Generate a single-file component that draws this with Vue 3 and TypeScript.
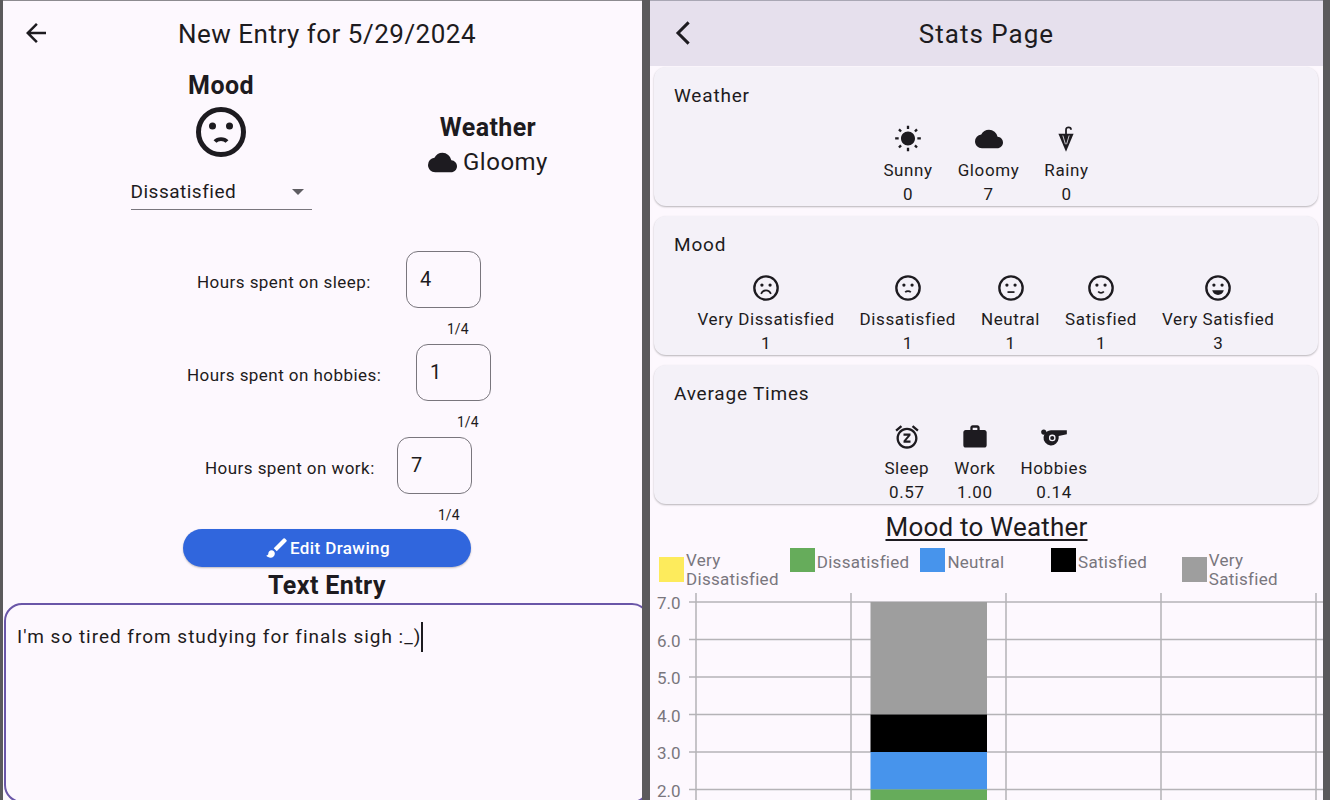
<script setup lang="ts">
const hourRows = [
  { label: "Hours spent on sleep:", value: "4", cls: "sleep" },
  { label: "Hours spent on hobbies:", value: "1", cls: "hobbies" },
  { label: "Hours spent on work:", value: "7", cls: "work" },
];

const weather = [
  { name: "Sunny", count: "0", icon: "sun" },
  { name: "Gloomy", count: "7", icon: "cloud" },
  { name: "Rainy", count: "0", icon: "umbrella" },
];

const moods = [
  { name: "Very Dissatisfied", count: "1", mouth: "M7.8 17c.8-1.9 2.3-3 4.2-3s3.4 1.1 4.2 3", fill: false },
  { name: "Dissatisfied", count: "1", mouth: "M9.6 15.6c.6-.7 1.4-1 2.4-1s1.8.3 2.4 1", fill: false },
  { name: "Neutral", count: "1", mouth: "M9 15.5h6", fill: false },
  { name: "Satisfied", count: "1", mouth: "M9.6 15c.6.8 1.4 1.2 2.4 1.2s1.8-.4 2.4-1.2", fill: false },
  { name: "Very Satisfied", count: "3", mouth: "M7 14h10c-.7 2.4-2.7 4-5 4s-4.3-1.6-5-4z", fill: true },
];

const times = [
  { name: "Sleep", value: "0.57", icon: "alarm" },
  { name: "Work", value: "1.00", icon: "work" },
  { name: "Hobbies", value: "0.14", icon: "whistle" },
];

const legend = [
  { color: "#fdeb5c", text: "Very\nDissatisfied", cls: "low" },
  { color: "#66ac5b", text: "Dissatisfied", cls: "" },
  { color: "#4794ec", text: "Neutral", cls: "" },
  { color: "#000000", text: "Satisfied", cls: "" },
  { color: "#9e9e9e", text: "Very\nSatisfied", cls: "low" },
];

const yTicks = [
  { label: "7.0", y: 12 },
  { label: "6.0", y: 49.5 },
  { label: "5.0", y: 87 },
  { label: "4.0", y: 124.5 },
  { label: "3.0", y: 162 },
  { label: "2.0", y: 199.5 },
];
const xLines = [46, 201, 356, 511, 666];
const bars = [
  { color: "#9e9e9e", y: 12, h: 112.5 },
  { color: "#000000", y: 124.5, h: 37.5 },
  { color: "#4794ec", y: 162, h: 37.5 },
  { color: "#66ac5b", y: 199.5, h: 20 },
];
</script>

<template>
  <div class="screen">
    <!-- entry page -->
    <section class="entry">
      <header class="entry-head">
        <svg class="back" viewBox="0 0 24 24"><path d="M20 11H7.83l5.59-5.59L12 4l-8 8 8 8 1.41-1.41L7.83 13H20z" /></svg>
        <h1>New Entry for 5/29/2024</h1>
      </header>

      <div class="pickers">
        <div class="mood-col">
          <h2>Mood</h2>
          <svg class="mood-big" viewBox="2 2 20 20">
            <circle cx="12" cy="12" r="9" fill="none" stroke="#1d1b20" stroke-width="2" />
            <circle cx="8.6" cy="9.6" r="1.4" />
            <circle cx="15.4" cy="9.6" r="1.4" />
            <path d="M9.6 15.8c.6-.7 1.4-1 2.4-1s1.8.3 2.4 1" fill="none" stroke="#1d1b20" stroke-width="1.5" />
          </svg>
          <div class="dropdown">
            <span>Dissatisfied</span>
            <i class="caret"></i>
          </div>
        </div>
        <div class="weather-col">
          <h2>Weather</h2>
          <div class="weather-now">
            <svg viewBox="0 0 24 24"><path d="M19.35 10.04A7.49 7.49 0 0 0 12 4C9.11 4 6.6 5.64 5.35 8.04A5.994 5.994 0 0 0 0 14c0 3.31 2.69 6 6 6h13c2.76 0 5-2.24 5-5 0-2.64-2.05-4.78-4.65-4.96z" /></svg>
            <span>Gloomy</span>
          </div>
        </div>
      </div>

      <div class="hours">
        <div v-for="row in hourRows" :key="row.cls" class="hour-row" :class="row.cls">
          <div class="hour-line">
            <span class="hour-label">{{ row.label }}</span>
            <div class="hour-box">{{ row.value }}</div>
          </div>
          <div class="counter">1/4</div>
        </div>
      </div>

      <div class="draw-btn">
        <svg viewBox="0 0 24 24"><path d="M7 14c-1.66 0-3 1.34-3 3 0 1.31-1.16 2-2 2 .92 1.22 2.49 2 4 2 2.21 0 4-1.79 4-4 0-1.66-1.34-3-3-3zm13.71-9.37-1.34-1.34a.996.996 0 0 0-1.41 0L9 12.25 11.75 15l8.96-8.96a.996.996 0 0 0 0-1.41z" /></svg>
        <span>Edit Drawing</span>
      </div>

      <h2 class="text-title">Text Entry</h2>
      <div class="text-box">
        <span>I'm so tired from studying for finals sigh :_)</span><i class="cursor"></i>
      </div>
    </section>

    <!-- stats page -->
    <section class="stats">
      <header class="stats-head">
        <svg class="chevron" viewBox="0 0 24 24"><path d="M16.5 3.5 8 12l8.5 8.5" /></svg>
        <h1>Stats Page</h1>
      </header>

      <div class="cards">
        <div class="card">
          <h3>Weather</h3>
          <div class="items">
            <div v-for="w in weather" :key="w.name" class="item">
              <svg viewBox="0 0 24 24" class="item-icon">
                <template v-if="w.icon === 'sun'">
                  <path d="M6.76 4.84l-1.8-1.79-1.41 1.41 1.79 1.79 1.42-1.41zM4 10.5H1v2h3v-2zm9-9.95h-2V3.5h2V.55zm7.45 3.91-1.41-1.41-1.79 1.79 1.41 1.41 1.79-1.79zm-3.21 13.7 1.79 1.8 1.41-1.41-1.8-1.79-1.4 1.4zM20 10.5v2h3v-2h-3zm-8-5c-3.31 0-6 2.69-6 6s2.69 6 6 6 6-2.69 6-6-2.69-6-6-6zm-1 16.95h2V19.5h-2v2.95zm-7.45-3.91 1.41 1.41 1.79-1.8-1.41-1.41-1.79 1.8z" />
                </template>
                <template v-else-if="w.icon === 'cloud'">
                  <path d="M19.35 10.04A7.49 7.49 0 0 0 12 4C9.11 4 6.6 5.64 5.35 8.04A5.994 5.994 0 0 0 0 14c0 3.31 2.69 6 6 6h13c2.76 0 5-2.24 5-5 0-2.64-2.05-4.78-4.65-4.96z" />
                </template>
                <template v-else>
                  <path d="M5.500 7.500h13L12 23z" />
                  <path d="M12 8V4.200C12 2.700 13 2 14.200 2s2.100.800 2.100 2" fill="none" stroke="#1d1b20" stroke-width="1.500" />
                  <path d="M9.300 9l2.200 7.500M14.700 9l-2.200 7.500" fill="none" stroke="#f4f1f8" stroke-width=".7" />
                </template>
              </svg>
              <span>{{ w.name }}</span>
              <span>{{ w.count }}</span>
            </div>
          </div>
        </div>

        <div class="card">
          <h3>Mood</h3>
          <div class="items">
            <div v-for="m in moods" :key="m.name" class="item">
              <svg viewBox="0 0 24 24" class="item-icon">
                <circle cx="12" cy="12" r="10" fill="none" stroke="#1d1b20" stroke-width="2" />
                <circle cx="8.500" cy="9.500" r="1.400" />
                <circle cx="15.500" cy="9.500" r="1.400" />
                <path :d="m.mouth" :fill="m.fill ? '#1d1b20' : 'none'" :stroke="m.fill ? 'none' : '#1d1b20'" stroke-width="1.500" />
              </svg>
              <span>{{ m.name }}</span>
              <span>{{ m.count }}</span>
            </div>
          </div>
        </div>

        <div class="card">
          <h3>Average Times</h3>
          <div class="items">
            <div v-for="t in times" :key="t.name" class="item">
              <svg viewBox="0 0 24 24" class="item-icon">
                <template v-if="t.icon === 'alarm'">
                  <path d="M7.880 3.390 6.600 1.860 2 5.710l1.290 1.530 4.590-3.850zM22 5.720l-4.600-3.860-1.290 1.530 4.600 3.860L22 5.720zM12 4c-4.970 0-9 4.030-9 9s4.020 9 9 9c4.970 0 9-4.030 9-9s-4.030-9-9-9zm0 16c-3.870 0-7-3.130-7-7s3.130-7 7-7 7 3.130 7 7-3.130 7-7 7zM9 11h3.630L9 15.200V17h6v-2h-3.630L15 10.800V9H9v2z" />
                </template>
                <template v-else-if="t.icon === 'work'">
                  <path d="M20 6h-4V4c0-1.110-.89-2-2-2h-4c-1.110 0-2 .89-2 2v2H4c-1.110 0-1.990.89-1.990 2L2 19c0 1.110.89 2 2 2h16c1.110 0 2-.89 2-2V8c0-1.110-.89-2-2-2zm-6 0h-4V4h4v2z" />
                </template>
                <template v-else>
                  <circle cx="3.200" cy="7.800" r="2.200" />
                  <path d="M10.500 6.300H23v3.400l-7 1.400v2A6.500 6.500 0 1 1 10.500 6.300z" />
                  <circle cx="10.500" cy="12.800" r="2.300" fill="none" stroke="#f4f1f8" stroke-width="1.100" />
                </template>
              </svg>
              <span>{{ t.name }}</span>
              <span>{{ t.value }}</span>
            </div>
          </div>
        </div>
      </div>

      <h2 class="chart-title">Mood to Weather</h2>
      <div class="legend">
        <div v-for="l in legend" :key="l.color" class="legend-item" :class="l.cls">
          <i :style="{ background: l.color }"></i>
          <span>{{ l.text }}</span>
        </div>
      </div>
      <svg class="chart" viewBox="0 0 673 210" width="673" height="210">
        <line v-for="x in xLines" :key="x" :x1="x" :x2="x" y1="3" y2="210" stroke="#a9a7ab" stroke-width="1.300" />
        <line v-for="t in yTicks" :key="t.label" x1="39" x2="673" :y1="t.y" :y2="t.y" stroke="#b5b3b7" stroke-width="1.500" />
        <rect v-for="b in bars" :key="b.color" x="220.500" :y="b.y" width="116.500" :height="b.h" :fill="b.color" />
        <text v-for="t in yTicks" :key="'l' + t.label" x="7" :y="t.y + 7" class="tick">{{ t.label }}</text>
      </svg>
    </section>
  </div>
</template>

<style scoped>
.screen {
  width: 1330px;
  height: 800px;
  display: flex;
  overflow: hidden;
  background: #5b5a5c;
  font-family: Roboto, "Liberation Sans", sans-serif;
  color: #1d1b20;
}
svg {
  fill: #1d1b20;
  display: block;
}
h1,
h2,
h3 {
  margin: 0;
  font-weight: 400;
}

.entry {
  width: 639px;
  margin-left: 3px;
  height: 800px;
  background: #fdf8fe;
  display: flex;
  flex-direction: column;
  border-top: 1px solid #8d8b90;
  box-sizing: border-box;
  overflow: hidden;
}
.entry-head {
  height: 65px;
  display: flex;
  align-items: center;
  position: relative;
  justify-content: center;
  flex: none;
  padding-left: 9px;
}
.entry-head h1 {
  font-size: 26px;
  line-height: 32px;
  margin-top: 1px;
  letter-spacing: 0.5px;
}
.back {
  position: absolute;
  left: 18px;
  top: 17px;
  width: 30px;
  height: 30px;
}
.pickers {
  display: flex;
  height: 160px;
  flex: none;
}
.mood-col {
  width: 436px;
  display: flex;
  flex-direction: column;
  align-items: center;
}
.mood-col h2,
.weather-col h2 {
  font-size: 25px;
  font-weight: 700;
  line-height: 28px;
  letter-spacing: 0.4px;
}
.mood-col h2 {
  margin-top: 6px;
}
.mood-big {
  width: 50px;
  height: 50px;
  margin-top: 7px;
}
.dropdown {
  width: 181px;
  height: 53px;
  box-sizing: border-box;
  border-bottom: 1.500px solid #79767d;
  display: flex;
  align-items: center;
  justify-content: space-between;
  padding: 17px 8px 0 0;
  font-size: 19px;
  letter-spacing: 0.5px;
}
.caret {
  width: 0;
  height: 0;
  border-left: 6px solid transparent;
  border-right: 6px solid transparent;
  border-top: 6px solid #5f5d62;
}
.weather-col {
  width: 100px;
  margin-left: -1px;
  display: flex;
  flex-direction: column;
  align-items: center;
  padding-top: 48px;
}
.weather-now {
  display: flex;
  align-items: center;
  gap: 6px;
  font-size: 24px;
  line-height: 36px;
  letter-spacing: 0.5px;
  white-space: nowrap;
  margin-top: 2px;
}
.weather-now svg {
  width: 29px;
  height: 29px;
}
.weather-col h2 {
  white-space: nowrap;
}

.hours {
  flex: none;
  margin-top: 25px;
  height: 278px;
}
.hour-row {
  display: flex;
  flex-direction: column;
  height: 93px;
}
.hour-line {
  display: flex;
  align-items: center;
}
.hour-label {
  font-size: 17px;
  letter-spacing: 0.45px;
  white-space: nowrap;
  margin-top: 5px;
}
.hour-box {
  width: 75px;
  height: 57px;
  box-sizing: border-box;
  border: 1px solid #79767d;
  border-radius: 12px;
  font-size: 20px;
  padding: 15px 0 0 13px;
  background: #fdf8fe;
}
.counter {
  font-size: 14px;
  line-height: 16px;
  margin-top: 13px;
}
.sleep {
  padding-left: 194px;
}
.sleep .hour-label {
  width: 209px;
}
.sleep .counter {
  margin-left: 250px;
}
.hobbies {
  padding-left: 184px;
}
.hobbies .hour-label {
  width: 229px;
}
.hobbies .counter {
  margin-left: 270px;
}
.work {
  padding-left: 202px;
}
.work .hour-label {
  width: 192px;
}
.work .counter {
  margin-left: 233px;
}

.draw-btn {
  margin: 0 0 0 180px;
  width: 288px;
  height: 38px;
  flex: none;
  border-radius: 19px;
  background: #3066dd;
  color: #fff;
  display: flex;
  align-items: center;
  justify-content: center;
  font-size: 17px;
  font-weight: 500;
  letter-spacing: 0.4px;
  box-shadow: 0 1px 2px rgba(0, 0, 0, 0.25);
}
.draw-btn svg {
  width: 26px;
  height: 26px;
  fill: #fff;
}
.text-title {
  font-size: 25px;
  font-weight: 700;
  line-height: 28px;
  letter-spacing: 0.4px;
  text-align: center;
  margin: 5px 0 3px;
  padding-left: 9px;
}
.text-box {
  margin: 0 -8px 0 1px;
  flex: none;
  height: 200px;
  box-sizing: border-box;
  border: 2px solid #6a56a8;
  border-radius: 18px;
  padding: 20px 11px;
  font-size: 19px;
  line-height: 24px;
  letter-spacing: 0.98px;
  display: flex;
  align-items: flex-start;
  white-space: nowrap;
}
.cursor {
  width: 2px;
  height: 30px;
  margin: -3px 0 0 0;
  background: #1d1b20;
}

.stats {
  width: 673px;
  margin-left: 8px;
  height: 800px;
  background: #fdf8fe;
  display: flex;
  flex-direction: column;
  border-top: 1px solid #a9a7b4;
  box-sizing: border-box;
  overflow: hidden;
}
.stats-head {
  height: 65px;
  flex: none;
  background: #e6e0ed;
  display: flex;
  align-items: center;
  justify-content: center;
  position: relative;
}
.stats-head h1 {
  font-size: 26px;
  letter-spacing: 1px;
}
.chevron {
  position: absolute;
  left: 18px;
  top: 17px;
  width: 30px;
  height: 30px;
  fill: none;
  stroke: #1d1b20;
  stroke-width: 2.400;
}
.cards {
  flex: none;
  display: flex;
  flex-direction: column;
  gap: 10px;
  padding: 1px 5px 0 4px;
}
.card {
  height: 139px;
  box-sizing: border-box;
  background: #f4f1f8;
  border-radius: 12px;
  box-shadow: 0 1px 2px rgba(0, 0, 0, 0.28);
  padding: 17px 20px 0;
}
.card h3 {
  font-size: 19px;
  line-height: 24px;
  letter-spacing: 0.8px;
}
.items {
  display: flex;
  justify-content: center;
  gap: 25px;
  margin-top: 17px;
}
.item {
  display: flex;
  flex-direction: column;
  align-items: center;
  font-size: 17px;
  line-height: 24px;
  letter-spacing: 0.6px;
  white-space: nowrap;
}
.item-icon {
  width: 28px;
  height: 28px;
  margin-bottom: 5px;
}

.chart-title {
  font-size: 26px;
  line-height: 30px;
  letter-spacing: 0.2px;
  text-align: center;
  text-decoration: underline;
  text-underline-offset: 3px;
  margin-top: 8px;
  flex: none;
}
.legend {
  flex: none;
  display: flex;
  height: 49px;
  padding: 4px 0 0 9px;
  box-sizing: border-box;
}
.legend-item {
  width: 130.700px;
  display: flex;
  align-items: flex-start;
  gap: 2px;
  font-size: 17px;
  line-height: 18.500px;
  letter-spacing: 0.3px;
  color: #79767d;
  white-space: pre-line;
}
.legend-item i {
  width: 25px;
  height: 24px;
  flex: none;
  margin-top: 2px;
}
.legend-item span {
  margin-top: 7px;
}
.legend-item.low i {
  margin-top: 11px;
  height: 25px;
}
.legend-item.low span {
  margin-top: 5px;
}
.chart {
  flex: none;
  margin-top: -1px;
}
.tick {
  font-size: 17px;
  fill: #79767d;
  font-family: Roboto, "Liberation Sans", sans-serif;
}
</style>

<style>
html,
body {
  margin: 0;
  background: #5b5a5c;
}
</style>
